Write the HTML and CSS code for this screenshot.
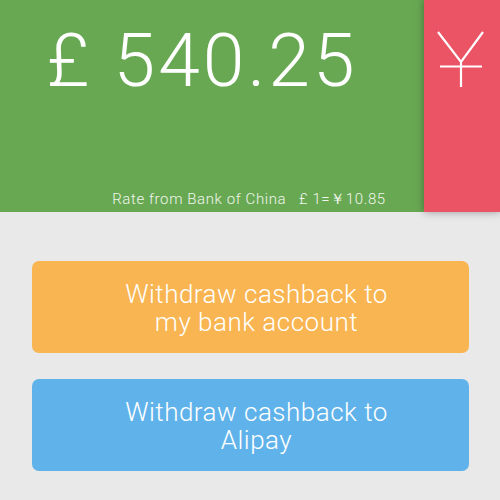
FILE: index.html
```html
<!DOCTYPE html>
<html>
<head>
<meta charset="utf-8">
<link rel="stylesheet" href="styles.css">
</head>
<body>
<header class="top">
  <div class="balance">
    <div class="amount">£ 540.25</div>
    <div class="rate">Rate from Bank of China&nbsp;&nbsp;&nbsp;£ 1=￥10.85</div>
  </div>
  <div class="switch">
    <svg class="yen" width="76" height="100" viewBox="0 0 76 100" aria-label="CNY">
      <path d="M14 32 L37 62 L59 32 M37 62 L37 87 M16 66.5 L58 66.5" fill="none" stroke="#fff" stroke-width="2.2"/>
    </svg>
  </div>
</header>
<main class="actions">
  <button class="btn bank">Withdraw cashback to<br>my bank account</button>
  <button class="btn alipay">Withdraw cashback to<br>Alipay</button>
</main>
</body>
</html>
```
FILE: styles.css
```css
html, body {
  margin: 0;
  padding: 0;
  background: #e9e9e9;
  font-family: "Roboto", "Liberation Sans", sans-serif;
}
.top {
  display: flex;
  height: 212px;
}
.balance {
  flex: 1;
  background: #68a853;
  color: #fff;
  display: flex;
  flex-direction: column;
  align-items: center;
}
.amount {
  font-family: "Roboto", "Liberation Sans", sans-serif;
  font-size: 75px;
  font-weight: 300;
  letter-spacing: 3px;
  line-height: 1;
  margin-top: 23px;
  padding-right: 20px;
}
.rate {
  margin-top: auto;
  margin-bottom: 3px;
  font-size: 15px;
  font-weight: 300;
  letter-spacing: 0.6px;
  color: #f0f6ec;
  padding-left: 74px;
}
.switch {
  width: 76px;
  background: #ea5464;
  box-shadow: 0 0 8px rgba(0,0,0,0.35);
  position: relative;
  z-index: 1;
}
.yen {
  display: block;
}
.actions {
  display: flex;
  flex-direction: column;
  gap: 26px;
  padding: 49px 31px 0 32px;
}
.btn {
  border: none;
  border-radius: 7px;
  height: 92px;
  color: #fff;
  font-family: "Roboto", "Liberation Sans", sans-serif;
  font-weight: 300;
  font-size: 26px;
  letter-spacing: 0.5px;
  line-height: 28px;
  padding: 2px 0 0 12px;
}
.bank {
  background: #f8b552;
}
.alipay {
  background: #60b3ea;
}
```
